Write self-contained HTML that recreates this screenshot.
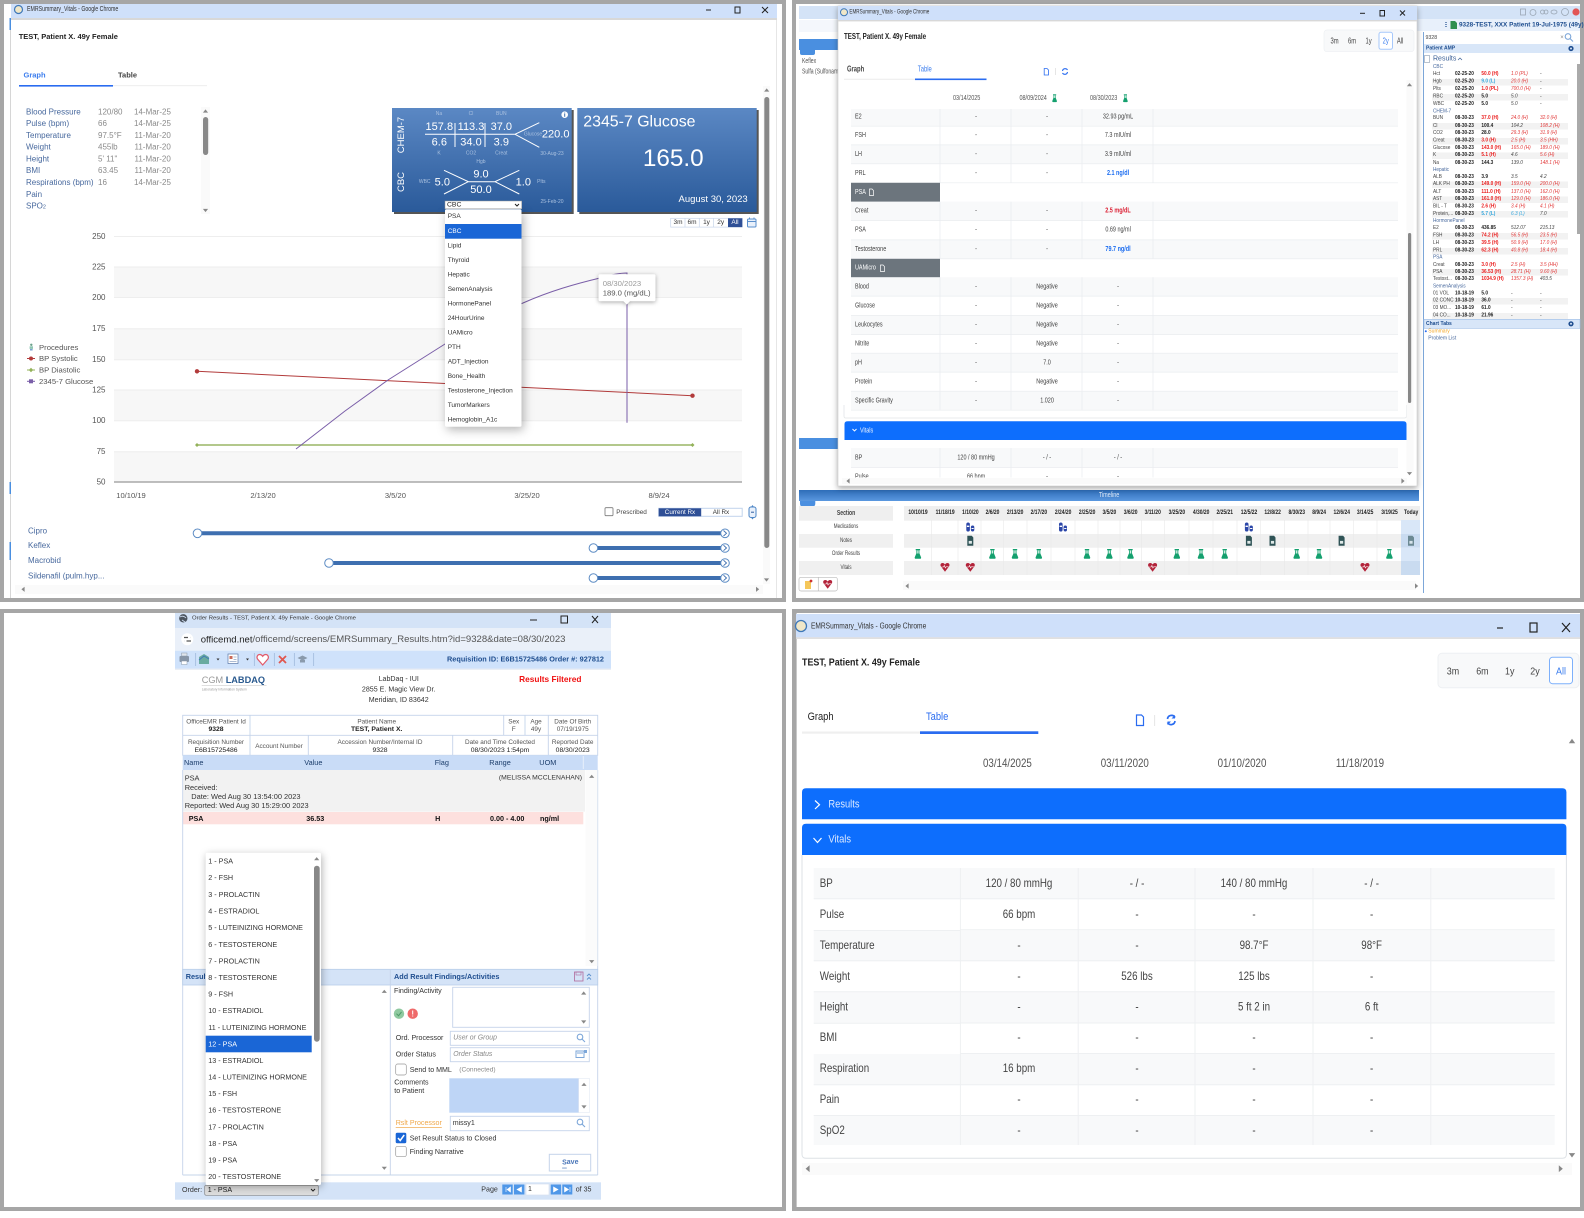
<!DOCTYPE html>
<html lang="en"><head><meta charset="utf-8"><title>EMR Summary</title>
<style>
html,body{margin:0;padding:0;background:#fff}
svg{display:block}
text{font-family:"Liberation Sans",sans-serif;dominant-baseline:central;transform-box:fill-box;transform-origin:0 50%;white-space:pre}
.m{text-anchor:middle;transform-origin:50% 50%}
.e{text-anchor:end;transform-origin:100% 50%}
.ttl text{transform:scaleX(.75)}
.p2 text{transform:scaleX(.73)}
.p2s text{transform:scaleX(.95)}
.p4 text{transform:scaleX(.85)}
text.r90{transform-box:view-box;transform-origin:0 0}
.b{font-weight:bold}
.i{font-style:italic}
.r{fill:#ea1c1c;font-weight:bold}
.ri{fill:#e23a3a;font-style:italic}
.u{fill:#34a6dc;font-weight:bold}
.ui{fill:#34a6dc;font-style:italic}
.d{fill:#222;font-weight:bold}
.n{fill:#444;font-style:italic}
</style></head><body>
<svg xmlns="http://www.w3.org/2000/svg" width="1584" height="1218" viewBox="0 0 1584 1218">
<defs>
<linearGradient id="cg" x1="0" y1="0" x2="0" y2="1"><stop offset="0" stop-color="#5b88c4"/><stop offset="1" stop-color="#2a5a9a"/></linearGradient>
<linearGradient id="tb" x1="0" y1="0" x2="0" y2="1"><stop offset="0" stop-color="#2e6db8"/><stop offset="1" stop-color="#5a98e0"/></linearGradient>
<g id="fl"><rect x="-2.2" y="-5" width="4.4" height="1.3" fill="#14a06e"/><path d="M-1.5-3.7H1.5V-.8L3.2 3.4Q3.4 4.8 2.2 4.8H-2.2Q-3.4 4.8-3.2 3.4L-1.5-.8Z" fill="#14a06e"/><rect x="-.7" y="-3.5" width="1.4" height="3" fill="#cfeee2"/></g>
<g id="pl"><rect x="-4" y="-4.5" width="3.6" height="9" rx="1.8" fill="#2b46a8"/><rect x="-3.4" y="-1.4" width="2.4" height="1.4" fill="#fff"/><rect x=".6" y="-1.5" width="3.4" height="6" rx="1.7" fill="#2b46a8"/><rect x="1.2" y="1" width="2.2" height="1" fill="#fff"/></g>
<g id="nt"><path d="M-3-5H1.5L3-3.2V5H-3Z" fill="#2f5356"/><rect x="-1.6" y=".2" width="3.2" height="2.8" fill="#dfe9e8"/></g>
<g id="ht"><path d="M0 4.8L-4-.5C-5.2-2.2-4.2-4-2.4-4-1.2-4-.4-3.2 0-2.5.4-3.2 1.2-4 2.4-4 4.2-4 5.2-2.2 4-.5Z" fill="#b3233a"/><path d="M-3.5 0H-1.5L-.7-1.5.3 1 1-.2H3.5" stroke="#fff" stroke-width=".6" fill="none"/></g>
<g id="mag" fill="none" stroke="#7da7d9" stroke-width="1.1"><circle cx="-1" cy="-1" r="2.8"/><path d="M1 1L4 4"/></g>
<g id="up"><path d="M-2.6 1.6H2.6L0-1.6Z" fill="#888"/></g>
<g id="dn"><path d="M-2.6-1.6H2.6L0 1.6Z" fill="#888"/></g>
<g id="lf"><path d="M1.6-2.6V2.6L-1.6 0Z" fill="#888"/></g>
<g id="rt"><path d="M-1.6-2.6V2.6L1.6 0Z" fill="#888"/></g>
<g id="up2"><path d="M-3.2 2.2H3.2L0-2.2Z" fill="#888"/></g>
<g id="dn2"><path d="M-3.2-2.2H3.2L0 2.2Z" fill="#888"/></g>
<g id="lf2"><path d="M2-3.4V3.4L-2 0Z" fill="#888"/></g>
<g id="rt2"><path d="M-2-3.4V3.4L2 0Z" fill="#888"/></g>
<clipPath id="clipP2"><rect x="838" y="109" width="560" height="368.5"/></clipPath>
</defs>

<!-- frames -->
<g fill="none" stroke="#a6a6a6" stroke-width="4">
<rect x="2" y="2" width="782" height="598"/>
<rect x="794" y="2" width="788" height="598"/>
<rect x="2" y="611" width="782" height="598"/>
<rect x="794" y="611" width="788" height="598"/>
</g>

<!-- ============ PANEL 1 ============ -->
<g>
<path d="M10.5 18V598" stroke="#d6d6d6" stroke-width="1"/>
<path d="M776.5 18V598" stroke="#e6e6e6" stroke-width="1"/>
<rect x="9.5" y="18" width="1.5" height="12" fill="#4a8fe0"/>
<rect x="9.5" y="482" width="1.5" height="12" fill="#4a8fe0"/>
<rect x="9.5" y="542" width="1.5" height="18" fill="#4a8fe0"/>
<rect x="11" y="4" width="766" height="14" fill="#cfe0fa"/>
<rect x="11" y="18" width="766" height="2" fill="#d8d8d8"/>
<circle cx="18.5" cy="9.5" r="4" fill="#f0e7c8" stroke="#3f78b8" stroke-width="1.2"/>
<g class="ttl"><text x="27" y="9.5" font-size="7" fill="#333">EMRSummary_Vitals - Google Chrome</text></g>
<g stroke="#222" fill="none" stroke-width="1"><path d="M706 10H711"/><rect x="735" y="7" width="5" height="6"/><path d="M762 7L768 13M768 7L762 13"/></g>

<text x="18.7" y="36.3" font-size="7.5" class="b" fill="#222">TEST, Patient X. 49y Female</text>
<text x="23.5" y="75" font-size="7.5" class="b" fill="#3b7dee">Graph</text>
<text x="118" y="75" font-size="7.5" class="b" fill="#444">Table</text>
<rect x="113" y="85" width="94" height="1.2" fill="#f0f0f0"/>
<rect x="19" y="85" width="94" height="1.6" fill="#2a6cf0"/>

<g font-size="8" fill="#48699e">
<text x="26" y="112">Blood Pressure</text><text x="26" y="123.7">Pulse (bpm)</text><text x="26" y="135.6">Temperature</text><text x="26" y="147">Weight</text><text x="26" y="159">Height</text><text x="26" y="170.7">BMI</text><text x="26" y="182.5">Respirations (bpm)</text><text x="26" y="194.3">Pain</text><text x="26" y="206">SPO<tspan dy="1.5" font-size="5.5">2</tspan></text>
</g>
<g font-size="8" fill="#8a8a8a">
<text x="98" y="112">120/80</text><text x="134" y="112">14-Mar-25</text>
<text x="98" y="123.7">66</text><text x="134" y="123.7">14-Mar-25</text>
<text x="98" y="135.6">97.5°F</text><text x="134.5" y="135.6">11-Mar-20</text>
<text x="98" y="147">455lb</text><text x="134.5" y="147">11-Mar-20</text>
<text x="98" y="159">5' 11"</text><text x="134.5" y="159">11-Mar-20</text>
<text x="98" y="170.7">63.45</text><text x="134.5" y="170.7">11-Mar-20</text>
<text x="98" y="182.5">16</text><text x="134" y="182.5">14-Mar-25</text>
</g>
<rect x="201" y="107" width="9" height="107" fill="#fafafa"/>
<rect x="203" y="117" width="5.2" height="38" rx="2.6" fill="#888"/>
<use href="#up" x="205.5" y="111"/><use href="#dn" x="205.5" y="210.5"/>

<!-- chart -->
<g fill="#f7f7f7"><rect x="114" y="267" width="628" height="30.5"/><rect x="114" y="328.7" width="628" height="31"/><rect x="114" y="390" width="628" height="30.7"/><rect x="114" y="451.7" width="628" height="30.3"/></g>
<g stroke="#eeeeee" stroke-width="1"><path d="M114 236.5H742M114 267H742M114 297.5H742M114 328.7H742M114 359.7H742M114 390H742M114 420.7H742M114 451.7H742"/></g>
<path d="M114 482H742" stroke="#a8a8a8" stroke-width="1.4"/>
<g font-size="8" fill="#555">
<text class="e" x="105.5" y="236.5">250</text><text class="e" x="105.5" y="267">225</text><text class="e" x="105.5" y="297.5">200</text><text class="e" x="105.5" y="328.7">175</text><text class="e" x="105.5" y="359.7">150</text><text class="e" x="105.5" y="390">125</text><text class="e" x="105.5" y="420.7">100</text><text class="e" x="105.5" y="451.7">75</text><text class="e" x="105.5" y="482">50</text>
</g>
<g font-size="7.6" fill="#555">
<text class="m" x="131" y="495.3">10/10/19</text><text class="m" x="263" y="495.3">2/13/20</text><text class="m" x="395.4" y="495.3">3/5/20</text><text class="m" x="527" y="495.3">3/25/20</text><text class="m" x="659" y="495.3">8/9/24</text>
</g>
<g font-size="7.7" fill="#555">
<text x="39" y="347.3">Procedures</text><text x="39" y="358.5">BP Systolic</text><text x="39" y="370">BP Diastolic</text><text x="39" y="381.3">2345-7 Glucose</text>
</g>
<circle cx="31.3" cy="344.8" r="1.2" fill="#6aa08a"/><rect x="29.6" y="346.3" width="3.4" height="2.6" fill="#8fc6b2"/><rect x="30" y="349.2" width="2.6" height="1.2" fill="#5a88c4"/>
<path d="M27 358.5H35" stroke="#b23b3b" stroke-width="1"/><circle cx="31" cy="358.5" r="2" fill="#b23b3b"/>
<path d="M27 370H35" stroke="#93b25a" stroke-width="1"/><path d="M31 367.8L33.2 370 31 372.2 28.8 370Z" fill="#93b25a"/>
<path d="M27 381.3H35" stroke="#7a5ea8" stroke-width="1"/><rect x="29" y="379.3" width="4" height="4" fill="#7a5ea8"/>
<path d="M197 371.3L692.5 395.7" stroke="#b23b3b" stroke-width="1" fill="none"/>
<circle cx="197" cy="371.3" r="2.2" fill="#b23b3b"/><circle cx="692.5" cy="395.7" r="2.2" fill="#b23b3b"/>
<path d="M197 445H692.5" stroke="#9ab566" stroke-width="1.6"/>
<path d="M197 443L199 445 197 447 195 445Z M692.5 443L694.5 445 692.5 447 690.5 445Z" fill="#93b25a"/>
<path d="M296 449L345 411L388 380L445 344C470 328 495 314 523 303C550 291 575 284 600 278C610 275 620 273 627 273V422.7" stroke="#7a5ea8" stroke-width="1" fill="none"/>
<!-- tooltip -->
<g style="filter:drop-shadow(0 1px 2px rgba(0,0,0,.35))"><path d="M600 274.3H654a1.5 1.5 0 0 1 1.5 1.5V299.8a1.5 1.5 0 0 1-1.5 1.5H630L626.7 304.5 623.4 301.3H600a1.5 1.5 0 0 1-1.5-1.5V275.8a1.5 1.5 0 0 1 1.5-1.5Z" fill="#fff"/></g>
<text x="602.7" y="283.7" font-size="7.7" fill="#999">08/30/2023</text>
<text x="602.7" y="293" font-size="7.7" fill="#555">189.0 (mg/dL)</text>

<!-- cards -->
<rect x="394" y="110" width="179.7" height="104" fill="#555"/>
<rect x="392" y="108" width="179.7" height="104" fill="url(#cg)"/>
<rect x="579.3" y="110" width="179.4" height="104" fill="#555"/>
<rect x="577.3" y="108" width="179.4" height="104" fill="url(#cg)"/>
<g fill="#fff" font-size="9.5"><text class="r90" transform="translate(401.7 135) rotate(-90)" text-anchor="middle" dominant-baseline="central">CHEM-7</text><text class="r90" transform="translate(401.7 182) rotate(-90)" text-anchor="middle" dominant-baseline="central">CBC</text></g>
<g font-size="5" fill="#a9c0df">
<text class="m" x="439" y="114">Na</text><text class="m" x="471" y="114">Cl</text><text class="m" x="501.3" y="114">BUN</text>
<text class="m" x="439" y="153.7">K</text><text class="m" x="471" y="153.7">CO2</text><text class="m" x="501.3" y="153.7">Creat</text>
<text class="m" x="552" y="154">30-Aug-23</text><text class="m" x="533" y="134.3">Glucose</text>
<text class="m" x="481" y="162">Hgb</text><text class="m" x="424.7" y="182">WBC</text><text class="m" x="541.3" y="182">Plts</text><text class="m" x="552" y="202">25-Feb-20</text>
</g>
<g font-size="11" fill="#fff">
<text class="m" x="439.3" y="127">157.8</text><text class="m" x="471" y="127">113.3</text><text class="m" x="501.3" y="127">37.0</text>
<text class="m" x="439.3" y="142.3">6.6</text><text class="m" x="471" y="142.3">34.0</text><text class="m" x="501.3" y="142.3">3.9</text>
<text class="m" x="555.7" y="134.7">220.0</text>
<text class="m" x="442.3" y="182.7">5.0</text><text class="m" x="481" y="174.7">9.0</text><text class="m" x="481" y="190">50.0</text><text class="m" x="523.3" y="182.7">1.0</text>
</g>
<g stroke="#fff" stroke-width="1" fill="none">
<path d="M425 134.3H515M455 123V147M485 123V147M539.3 122.7L515 134.3 539.3 147.3"/>
<path d="M444 170.3L468.3 181.7 444 194M468.3 181.7H495M519.3 170.3L495 181.7 519.3 194"/>
</g>
<circle cx="564.7" cy="114.7" r="3.3" fill="#fff"/><rect x="564.2" y="114" width="1" height="2.8" fill="#3f6fae"/><rect x="564.2" y="112.6" width="1" height="1" fill="#3f6fae"/>
<text x="583.3" y="122" font-size="15.9" fill="#fff">2345-7 Glucose</text>
<text class="m" x="673.3" y="158.3" font-size="24.3" fill="#fff">165.0</text>
<text class="e" x="747.7" y="199.7" font-size="9.5" fill="#fff">August 30, 2023</text>

<rect x="670.7" y="218.3" width="71.6" height="8.8" fill="#fff" stroke="#c8d6ea" stroke-width=".7"/>
<rect x="728" y="218.3" width="14.3" height="8.8" fill="#2f4f96"/>
<path d="M685 218.3V227M699.3 218.3V227M713.6 218.3V227" stroke="#c8d6ea" stroke-width=".7"/>
<g font-size="6.5" fill="#333"><text class="m" x="678" y="222.7">3m</text><text class="m" x="692" y="222.7">6m</text><text class="m" x="706.5" y="222.7">1y</text><text class="m" x="720.7" y="222.7">2y</text><text class="m" x="735" y="222.7" fill="#fff">All</text></g>
<rect x="747.5" y="219" width="8.5" height="8" rx="1" fill="#e8f0fb" stroke="#5a8fcc"/><path d="M747.5 221.5H756M749.5 217.5V219M754 217.5V219" stroke="#5a8fcc"/>

<!-- select + dropdown -->
<g style="filter:drop-shadow(2px 3px 5px rgba(0,0,0,.3))"><rect x="445" y="209.3" width="76.5" height="217.4" rx="1.5" fill="#fff"/></g>
<rect x="445" y="201" width="76.7" height="7.8" fill="#fff" stroke="#999" stroke-width=".5"/>
<text x="447" y="205" font-size="6.8" fill="#222">CBC</text>
<path d="M515 204L517 206 519 204" stroke="#222" fill="none"/>
<rect x="445" y="224" width="76.5" height="14.7" fill="#1a66d6"/>
<g font-size="6.5" fill="#333">
<text x="447.7" y="216.7">PSA</text><text x="447.7" y="231.3" fill="#fff">CBC</text><text x="447.7" y="246">Lipid</text><text x="447.7" y="260.3">Thyroid</text><text x="447.7" y="275">Hepatic</text><text x="447.7" y="289.3">SemenAnalysis</text><text x="447.7" y="304">HormonePanel</text><text x="447.7" y="318.3">24HourUrine</text><text x="447.7" y="333">UAMicro</text><text x="447.7" y="347.3">PTH</text><text x="447.7" y="362">ADT_Injection</text><text x="447.7" y="376.3">Bone_Health</text><text x="447.7" y="391">Testosterone_Injection</text><text x="447.7" y="405.3">TumorMarkers</text><text x="447.7" y="420">Hemoglobin_A1c</text>
</g>

<!-- Rx -->
<rect x="605" y="507.7" width="8" height="8" rx="1" fill="#fff" stroke="#777" stroke-width=".8"/>
<text x="616.3" y="512.3" font-size="6.4" fill="#444">Prescribed</text>
<rect x="658.7" y="508.3" width="83.5" height="8" fill="#fff" stroke="#c2d4ec"/>
<rect x="658.7" y="508.3" width="42.5" height="8" fill="#2f4f96"/>
<text class="m" x="680" y="512.3" font-size="6.3" fill="#fff">Current Rx</text>
<text class="m" x="721" y="512.3" font-size="6.3" fill="#333">All Rx</text>
<rect x="749" y="507" width="7" height="10.5" rx="2" fill="#e8f0fb" stroke="#4d86c6"/><path d="M751 512.2H754" stroke="#2f5fa0"/><path d="M752.5 505L751 507H754ZM752.5 519.5L751 517.5H754Z" fill="#4d86c6"/>

<!-- drugs -->
<g font-size="8" fill="#48699e"><text x="28" y="531">Cipro</text><text x="28" y="545.7">Keflex</text><text x="28" y="560.7">Macrobid</text><text x="28" y="576">Sildenafil (pulm.hyp...</text></g>
<g stroke="#3e6fb0" stroke-width="4"><path d="M197 533.3H725M593.4 548H725M329 563H725M593.4 578H725"/></g>
<g fill="#fff" stroke="#5d8cc4" stroke-width="1"><circle cx="197.5" cy="533.3" r="4.3"/><circle cx="593.4" cy="548" r="4.3"/><circle cx="329" cy="563" r="4.3"/><circle cx="593.4" cy="578" r="4.3"/><circle cx="725" cy="533.3" r="4.3"/><circle cx="725" cy="548" r="4.3"/><circle cx="725" cy="563" r="4.3"/><circle cx="725" cy="578" r="4.3"/></g>
<g stroke="#3e6fb0" stroke-width=".9" fill="none"><path d="M723.5 530.5L726.5 533.3 723.5 536M723.5 545.2L726.5 548 723.5 550.7M723.5 560.2L726.5 563 723.5 565.7M723.5 575.2L726.5 578 723.5 580.7"/></g>

<!-- scrollbars -->
<rect x="763" y="86" width="7" height="498" fill="#fafafa"/>
<rect x="764.3" y="97" width="5" height="451" rx="2.5" fill="#888"/>
<use href="#up" x="766.7" y="90"/><use href="#dn" x="766.5" y="580"/>
<rect x="15" y="585" width="748" height="9" fill="#fafafa"/>
<use href="#lf" x="23" y="589.3"/><use href="#rt" x="757.6" y="589.3"/>
</g>

<!-- ============ PANEL 2 ============ -->
<g>
<rect x="799" y="6" width="39" height="13" fill="#d4e3f7"/>
<rect x="799" y="20" width="39" height="12" fill="#f4f7fc"/>
<rect x="799" y="39" width="39" height="11" fill="#4a8fe0"/>
<path d="M800 50H815V53Q815 55 813 55H802Q800 55 800 53Z" fill="#4a8fe0"/>
<g class="p2" font-size="7" fill="#555"><text x="802" y="61.5">Keflex</text><text x="802" y="71.7">Sulfa (Sulfonamid</text></g>
<rect x="799" y="438" width="39" height="11" fill="#4a8fe0"/>

<!-- sidebar -->
<rect x="1417" y="6" width="163" height="13" fill="#d4e3f7"/>
<rect x="1417" y="19" width="163" height="12" fill="#e8f0fb"/>
<path d="M1423.5 32V593" stroke="#7da7d9" stroke-width="1"/>
<g fill="none" stroke="#9aa6b4" stroke-width=".8"><rect x="1520.5" y="9" width="5" height="6"/><circle cx="1533" cy="12.5" r="3"/><circle cx="1542.5" cy="12" r="2"/><circle cx="1546" cy="12" r="2"/><ellipse cx="1554" cy="12" rx="3" ry="2"/><circle cx="1565" cy="12" r="3.5"/></g>
<circle cx="1576" cy="12" r="3.6" fill="#e25555"/>
<path d="M1446 22V28" stroke="#1f4e8f" stroke-width="1.2" stroke-dasharray="1 1"/>
<path d="M1450.5 21H1455L1457 23V29H1450.5Z" fill="#2f8f4f"/>
<text x="1459" y="25" font-size="6.4" class="b" fill="#1f4e8f">9328-TEST, XXX Patient 19-Jul-1975 (49y)</text>
<rect x="1424" y="33" width="156" height="9" fill="#fff"/>
<g class="p2s"><text x="1425.5" y="38" font-size="5.5" fill="#444">9328</text></g>
<text x="1562" y="38" font-size="6" fill="#888" class="m">×</text><use href="#mag" x="1569" y="37.5"/>
<rect x="1424" y="44" width="156" height="9" fill="#d8e6f8"/>
<g class="p2s"><text x="1426" y="48.5" font-size="5.3" class="b" fill="#1f4e8f">Patient AMP</text></g>
<circle cx="1571" cy="48.5" r="2.6" fill="#1f4e8f"/><circle cx="1571" cy="48.5" r="1" fill="#d8e6f8"/>
<rect x="1424.5" y="55.5" width="5" height="7" fill="#fff" stroke="#8a9bb0" stroke-width=".6"/>
<text x="1433" y="59" font-size="7" fill="#3a5f95">Results</text><path d="M1458 60L1460 58 1462 60" stroke="#3a5f95" fill="none" stroke-width=".7"/>

<g fill="#f2f2f2"><rect x="1432" y="79" width="136" height="6.5"/><rect x="1432" y="94" width="136" height="6.5"/><rect x="1432" y="123" width="136" height="6.5"/><rect x="1432" y="138" width="136" height="6.5"/><rect x="1432" y="152.5" width="136" height="6.5"/><rect x="1432" y="181.5" width="136" height="6.5"/><rect x="1432" y="196.5" width="136" height="6.5"/><rect x="1432" y="211" width="136" height="6.5"/><rect x="1432" y="233" width="136" height="6.5"/><rect x="1432" y="248" width="136" height="6.5"/><rect x="1432" y="269" width="136" height="6.5"/><rect x="1432" y="298" width="136" height="6.5"/><rect x="1432" y="313" width="136" height="6"/></g>
<g class="p2s" font-size="5">
<g fill="#48699e"><text x="1433" y="67.7">CBC</text><text x="1433" y="112">CHEM-7</text><text x="1433" y="170.3">Hepatic</text><text x="1433" y="221.7">HormonePanel</text><text x="1433" y="258">PSA</text><text x="1433" y="287">SemenAnalysis</text></g>
<g fill="#444"><text x="1433" y="74.7">Hct</text><text x="1433" y="82">Hgb</text><text x="1433" y="89.7">Plts</text><text x="1433" y="97">RBC</text><text x="1433" y="104.7">WBC</text><text x="1433" y="118.7">BUN</text><text x="1433" y="126.3">Cl</text><text x="1433" y="133.7">CO2</text><text x="1433" y="141">Creat</text><text x="1433" y="148.3">Glucose</text><text x="1433" y="155.7">K</text><text x="1433" y="163.3">Na</text><text x="1433" y="177.7">ALB</text><text x="1433" y="184.7">ALK PH</text><text x="1433" y="192.3">ALT</text><text x="1433" y="199.7">AST</text><text x="1433" y="207">BIL - T</text><text x="1433" y="214.3">Protein,...</text><text x="1433" y="228.7">E2</text><text x="1433" y="236">FSH</text><text x="1433" y="243.3">LH</text><text x="1433" y="251">PRL</text><text x="1433" y="265.3">Creat</text><text x="1433" y="272.3">PSA</text><text x="1433" y="279.7">Testost...</text><text x="1433" y="294">01 VOL</text><text x="1433" y="301">02 CONC</text><text x="1433" y="308.3">03 MO...</text><text x="1433" y="316">04 CO...</text></g>
<g class="d">
<text x="1455" y="74.7">02-25-20</text><text x="1455" y="82">02-25-20</text><text x="1455" y="89.7">02-25-20</text><text x="1455" y="97">02-25-20</text><text x="1455" y="104.7">02-25-20</text>
<text x="1455" y="118.7">08-30-23</text><text x="1455" y="126.3">08-30-23</text><text x="1455" y="133.7">08-30-23</text><text x="1455" y="141">08-30-23</text><text x="1455" y="148.3">08-30-23</text><text x="1455" y="155.7">08-30-23</text><text x="1455" y="163.3">08-30-23</text>
<text x="1455" y="177.7">08-30-23</text><text x="1455" y="184.7">08-30-23</text><text x="1455" y="192.3">08-30-23</text><text x="1455" y="199.7">08-30-23</text><text x="1455" y="207">08-30-23</text><text x="1455" y="214.3">08-30-23</text>
<text x="1455" y="228.7">08-30-23</text><text x="1455" y="236">08-30-23</text><text x="1455" y="243.3">08-30-23</text><text x="1455" y="251">08-30-23</text><text x="1455" y="265.3">08-30-23</text><text x="1455" y="272.3">08-30-23</text><text x="1455" y="279.7">08-30-23</text>
<text x="1455" y="294">10-18-19</text><text x="1455" y="301">10-18-19</text><text x="1455" y="308.3">10-18-19</text><text x="1455" y="316">10-18-19</text>
</g>
<text x="1481.4" y="74.7" class="r">50.0 (H)</text><text x="1511" y="74.7" class="ri">1.0 (PL)</text><text x="1540" y="74.7" class="n">-</text>
<text x="1481.4" y="82" class="u">9.0 (L)</text><text x="1511" y="82" class="ri">20.0 (H)</text><text x="1540" y="82" class="n">-</text>
<text x="1481.4" y="89.7" class="r">1.0 (PL)</text><text x="1511" y="89.7" class="ri">700.0 (H)</text><text x="1540" y="89.7" class="n">-</text>
<text x="1481.4" y="97" class="d">5.0</text><text x="1511" y="97" class="n">5.0</text><text x="1540" y="97" class="n">-</text>
<text x="1481.4" y="104.7" class="d">5.0</text><text x="1511" y="104.7" class="n">5.0</text><text x="1540" y="104.7" class="n">-</text>
<text x="1481.4" y="118.7" class="r">37.0 (H)</text><text x="1511" y="118.7" class="ri">24.0 (H)</text><text x="1540" y="118.7" class="ri">32.0 (H)</text>
<text x="1481.4" y="126.3" class="d">100.4</text><text x="1511" y="126.3" class="n">104.2</text><text x="1540" y="126.3" class="ri">108.2 (H)</text>
<text x="1481.4" y="133.7" class="d">28.0</text><text x="1511" y="133.7" class="ri">29.3 (H)</text><text x="1540" y="133.7" class="ri">31.9 (H)</text>
<text x="1481.4" y="141" class="r">3.0 (H)</text><text x="1511" y="141" class="ri">2.5 (H)</text><text x="1540" y="141" class="ri">3.5 (HH)</text>
<text x="1481.4" y="148.3" class="r">143.0 (H)</text><text x="1511" y="148.3" class="ri">165.0 (H)</text><text x="1540" y="148.3" class="ri">189.0 (H)</text>
<text x="1481.4" y="155.7" class="r">5.1 (H)</text><text x="1511" y="155.7" class="n">4.6</text><text x="1540" y="155.7" class="ri">5.6 (H)</text>
<text x="1481.4" y="163.3" class="d">144.3</text><text x="1511" y="163.3" class="n">139.0</text><text x="1540" y="163.3" class="ri">148.1 (H)</text>
<text x="1481.4" y="177.7" class="d">3.9</text><text x="1511" y="177.7" class="n">3.5</text><text x="1540" y="177.7" class="n">4.2</text>
<text x="1481.4" y="184.7" class="r">149.0 (H)</text><text x="1511" y="184.7" class="ri">159.0 (H)</text><text x="1540" y="184.7" class="ri">200.0 (H)</text>
<text x="1481.4" y="192.3" class="r">111.0 (H)</text><text x="1511" y="192.3" class="ri">137.0 (H)</text><text x="1540" y="192.3" class="ri">162.0 (H)</text>
<text x="1481.4" y="199.7" class="r">161.0 (H)</text><text x="1511" y="199.7" class="ri">129.0 (H)</text><text x="1540" y="199.7" class="ri">186.0 (H)</text>
<text x="1481.4" y="207" class="r">2.6 (H)</text><text x="1511" y="207" class="ri">3.4 (H)</text><text x="1540" y="207" class="ri">4.1 (H)</text>
<text x="1481.4" y="214.3" class="u">5.7 (L)</text><text x="1511" y="214.3" class="ui">6.3 (L)</text><text x="1540" y="214.3" class="n">7.0</text>
<text x="1481.4" y="228.7" class="d">436.85</text><text x="1511" y="228.7" class="n">512.07</text><text x="1540" y="228.7" class="n">215.13</text>
<text x="1481.4" y="236" class="r">74.2 (H)</text><text x="1511" y="236" class="ri">56.5 (H)</text><text x="1540" y="236" class="ri">23.5 (H)</text>
<text x="1481.4" y="243.3" class="r">39.5 (H)</text><text x="1511" y="243.3" class="ri">50.9 (H)</text><text x="1540" y="243.3" class="ri">17.0 (H)</text>
<text x="1481.4" y="251" class="r">62.3 (H)</text><text x="1511" y="251" class="ri">40.8 (H)</text><text x="1540" y="251" class="ri">18.4 (H)</text>
<text x="1481.4" y="265.3" class="r">3.0 (H)</text><text x="1511" y="265.3" class="ri">2.5 (H)</text><text x="1540" y="265.3" class="ri">3.5 (HH)</text>
<text x="1481.4" y="272.3" class="r">36.53 (H)</text><text x="1511" y="272.3" class="ri">28.71 (H)</text><text x="1540" y="272.3" class="ri">9.60 (H)</text>
<text x="1481.4" y="279.7" class="r">1034.9 (H)</text><text x="1511" y="279.7" class="ri">1357.3 (H)</text><text x="1540" y="279.7" class="n">403.5</text>
<text x="1481.4" y="294" class="d">5.0</text><text x="1511" y="294" class="n">-</text><text x="1540" y="294" class="n">-</text>
<text x="1481.4" y="301" class="d">36.0</text><text x="1511" y="301" class="n">-</text><text x="1540" y="301" class="n">-</text>
<text x="1481.4" y="308.3" class="d">61.0</text><text x="1511" y="308.3" class="n">-</text><text x="1540" y="308.3" class="n">-</text>
<text x="1481.4" y="316" class="d">21.96</text><text x="1511" y="316" class="n">-</text><text x="1540" y="316" class="n">-</text>
</g>
<rect x="1577" y="64" width="3" height="170" fill="#aaa"/>
<rect x="1424" y="319.3" width="156" height="9" fill="#d8e6f8" stroke="#9dbce6" stroke-width=".6"/>
<g class="p2s"><text x="1426" y="323.8" font-size="5.3" class="b" fill="#1f4e8f">Chart Tabs</text><text x="1428.3" y="331.3" font-size="5.3" fill="#f5a623">Summary</text><text x="1428.3" y="338.3" font-size="5.3" fill="#48699e">Problem List</text></g>
<circle cx="1571" cy="323.8" r="2.6" fill="#1f4e8f"/><circle cx="1571" cy="323.8" r="1" fill="#d8e6f8"/>
<circle cx="1425.8" cy="331.3" r="1" fill="#2a6cf0"/>

<!-- timeline -->
<rect x="799" y="490" width="620" height="11" fill="url(#tb)"/>
<g class="p2"><text class="m" x="1109" y="495.5" font-size="7.5" fill="#dfeaf8">Timeline</text></g>
<path d="M800 501H815.3V503.5Q815.3 506.7 812 506.7H803Q800 506.7 800 503.5Z" fill="#4a8fe0"/>
<rect x="799" y="506" width="94" height="14.7" fill="#efefef"/>
<rect x="904" y="506" width="516" height="14.7" fill="#efefef"/>
<rect x="799" y="534" width="94" height="13.7" fill="#f0f0f0"/>
<rect x="904" y="534" width="516" height="13.7" fill="#f0f0f0"/>
<rect x="799" y="561" width="94" height="14" fill="#f0f0f0"/>
<rect x="904" y="561" width="516" height="14" fill="#f0f0f0"/>
<rect x="1401" y="520" width="19" height="14" fill="#d9e7f8"/><rect x="1401" y="534" width="19" height="13.7" fill="#c9dbf0"/><rect x="1401" y="547.7" width="19" height="13.3" fill="#d9e7f8"/><rect x="1401" y="561" width="19" height="14" fill="#c9dbf0"/>
<g stroke="#e8e8e8" stroke-width=".6"><path d="M931.5 520V575M958 520V575M981 520V575M1003.7 520V575M1027 520V575M1051 520V575M1075 520V575M1098 520V575M1120 520V575M1141.5 520V575M1164.7 520V575M1189 520V575M1213 520V575M1237 520V575M1260.7 520V575M1284.6 520V575M1308 520V575M1330 520V575M1353.3 520V575M1377 520V575"/></g>
<g class="p2" font-size="7" fill="#444"><text class="m b" x="846" y="513.5">Section</text><text class="m" x="846" y="527" font-size="6.3">Medications</text><text class="m" x="846" y="540.7" font-size="6.3">Notes</text><text class="m" x="846" y="554" font-size="6.3">Order Results</text><text class="m" x="846" y="567.7" font-size="6.3">Vitals</text></g>
<g class="p2" font-size="6.8" fill="#222">
<text class="m b" x="917.9" y="513">10/10/19</text><text class="m b" x="945" y="513">11/18/19</text><text class="m b" x="970.3" y="513">1/10/20</text><text class="m b" x="992.4" y="513">2/6/20</text><text class="m b" x="1015" y="513">2/13/20</text><text class="m b" x="1038.8" y="513">2/17/20</text><text class="m b" x="1063" y="513">2/24/20</text><text class="m b" x="1087" y="513">2/25/20</text><text class="m b" x="1109.3" y="513">3/5/20</text><text class="m b" x="1130.5" y="513">3/6/20</text><text class="m b" x="1152.6" y="513">3/11/20</text><text class="m b" x="1176.8" y="513">3/25/20</text><text class="m b" x="1201" y="513">4/30/20</text><text class="m b" x="1224.7" y="513">2/25/21</text><text class="m b" x="1248.9" y="513">12/5/22</text><text class="m b" x="1272.5" y="513">12/8/22</text><text class="m b" x="1296.7" y="513">8/30/23</text><text class="m b" x="1319" y="513">8/9/24</text><text class="m b" x="1341.6" y="513">12/6/24</text><text class="m b" x="1365" y="513">3/14/25</text><text class="m b" x="1389.4" y="513">3/19/25</text><text class="m b" x="1411" y="513">Today</text>
</g>
<use href="#pl" x="970.3" y="527"/><use href="#pl" x="1063" y="527"/><use href="#pl" x="1248.9" y="527"/>
<use href="#nt" x="970.3" y="540.7"/><use href="#nt" x="1248.9" y="540.7"/><use href="#nt" x="1272.5" y="540.7"/><use href="#nt" x="1341.6" y="540.7"/><use href="#nt" x="1411" y="540.7" opacity=".6"/>
<use href="#fl" x="917.9" y="554"/><use href="#fl" x="992.4" y="554"/><use href="#fl" x="1015" y="554"/><use href="#fl" x="1038.8" y="554"/><use href="#fl" x="1087" y="554"/><use href="#fl" x="1109.3" y="554"/><use href="#fl" x="1130.5" y="554"/><use href="#fl" x="1176.8" y="554"/><use href="#fl" x="1201" y="554"/><use href="#fl" x="1224.7" y="554"/><use href="#fl" x="1296.7" y="554"/><use href="#fl" x="1319" y="554"/><use href="#fl" x="1389.4" y="554"/>
<use href="#ht" x="945" y="567"/><use href="#ht" x="970.3" y="567"/><use href="#ht" x="1152.6" y="567"/><use href="#ht" x="1365" y="567"/>
<rect x="799" y="577.3" width="38.3" height="13.7" rx="2" fill="#fff" stroke="#bbb" stroke-width=".7"/><path d="M818.3 577.3V591" stroke="#bbb" stroke-width=".7"/>
<path d="M805 581H811V589H805Z" fill="#f5c75a"/><circle cx="811" cy="581" r="1.4" fill="#c33"/>
<use href="#ht" x="827.7" y="584"/>
<rect x="903" y="581" width="513" height="9" fill="#fafafa"/>
<use href="#lf" x="907" y="586"/><use href="#rt" x="1416.6" y="586"/>

<!-- popup window -->
<g style="filter:drop-shadow(0 2px 3px rgba(0,0,0,.35))"><rect x="838" y="6" width="579" height="480" fill="#fff" stroke="#cfcfcf" stroke-width=".6"/></g>
<rect x="838" y="6" width="579" height="14" fill="#cfe0fa"/><rect x="838" y="20" width="579" height="1.4" fill="#d8d8d8"/>
<circle cx="844" cy="12.3" r="3.5" fill="#f0e7c8" stroke="#3f78b8"/>
<g class="p2"><text x="849.4" y="12.3" font-size="6.3" fill="#333">EMRSummary_Vitals - Google Chrome</text></g>
<g stroke="#222" fill="none" stroke-width="1"><path d="M1360 13.3H1365"/><rect x="1380" y="10.5" width="4.5" height="5.5"/><path d="M1400 10.5L1405 15.5M1405 10.5L1400 15.5"/></g>
<g class="p2"><text x="844" y="36" font-size="8.5" class="b" fill="#222">TEST, Patient X. 49y Female</text>
<text x="847" y="69.7" font-size="8" class="b" fill="#444">Graph</text><text x="917.8" y="69.7" font-size="8" fill="#3b7dee">Table</text></g>
<rect x="844" y="78.7" width="71" height="1.2" fill="#efefef"/><rect x="915" y="78.5" width="71.5" height="1.6" fill="#2a6cf0"/>
<path d="M1044.2 68.5H1047L1048.5 70V75H1044.2Z" fill="#fff" stroke="#2a6cf0" stroke-width=".8"/>
<path d="M1055.5 68V75" stroke="#e5e5e5"/>
<path d="M1062.5 71A2.7 2.7 0 0 1 1067.5 70M1067.5 72A2.7 2.7 0 0 1 1062.5 73" stroke="#2a6cf0" fill="none" stroke-width="1.1"/>
<rect x="1324" y="30" width="90" height="21.7" rx="3" fill="#f8f9fa" stroke="#eef0f3" stroke-width=".7"/>
<rect x="1379" y="32.3" width="13.5" height="17" rx="2" fill="#fff" stroke="#a6c8fb"/>
<g class="p2" font-size="8" fill="#444"><text class="m" x="1334.6" y="41.7">3m</text><text class="m" x="1352" y="41.7">6m</text><text class="m" x="1368.5" y="41.7">1y</text><text class="m" x="1385.6" y="41.7" fill="#3b7dee">2y</text><text class="m" x="1400" y="41.7">All</text></g>
<g class="p2" font-size="7.5" fill="#555"><text x="953" y="98.3">03/14/2025</text><text x="1019.5" y="98.3">08/09/2024</text><text x="1090" y="98.3">08/30/2023</text></g>
<use href="#fl" transform="translate(1054.6 98.3) scale(.72 .8)"/><use href="#fl" transform="translate(1125.4 98.3) scale(.72 .8)"/>

<g clip-path="url(#clipP2)">
<g fill="#f8f9fa"><rect x="851" y="107.2" width="547" height="19"/><rect x="851" y="144.9" width="547" height="18.9"/><rect x="851" y="201.6" width="547" height="18.9"/><rect x="851" y="239.9" width="547" height="18.9"/><rect x="851" y="277.2" width="547" height="18.9"/><rect x="851" y="315.5" width="547" height="19"/><rect x="851" y="353.2" width="547" height="18.9"/><rect x="851" y="391.2" width="547" height="19"/><rect x="851" y="448" width="547" height="19.7"/></g>
<g stroke="#e9ecef" stroke-width=".7"><path d="M851 126.2H1398M851 144.9H1398M851 163.8H1398M851 182.8H1398M851 220.5H1398M851 239.9H1398M851 258.8H1398M851 296.1H1398M851 315.5H1398M851 334.5H1398M851 353.2H1398M851 372.1H1398M851 391.2H1398M851 410.2H1398M851 467.7H1398"/>
<path d="M940 107V182.8M1011 107V182.8M1082 107V182.8M1153 107V182.8M940 201.6V258.8M1011 201.6V258.8M1082 201.6V258.8M1153 201.6V258.8M940 277.2V410.2M1011 277.2V410.2M1082 277.2V410.2M1153 277.2V410.2M940 448V478M1011 448V478M1082 448V478M1153 448V478"/></g>
<rect x="851" y="182.8" width="89" height="18.8" fill="#6c757d"/>
<rect x="851" y="258.8" width="89" height="18.4" fill="#6c757d"/>
<g class="p2" font-size="7.5" fill="#444">
<text x="855" y="116.7">E2</text><text class="m" x="976" y="116.7">-</text><text class="m" x="1047" y="116.7">-</text><text class="m" x="1118" y="116.7">32.93 pg/mL</text>
<text x="855" y="135.3">FSH</text><text class="m" x="976" y="135.3">-</text><text class="m" x="1047" y="135.3">-</text><text class="m" x="1118" y="135.3">7.3 mIU/ml</text>
<text x="855" y="154.3">LH</text><text class="m" x="976" y="154.3">-</text><text class="m" x="1047" y="154.3">-</text><text class="m" x="1118" y="154.3">3.9 mIU/ml</text>
<text x="855" y="173.3">PRL</text><text class="m" x="976" y="173.3">-</text><text class="m" x="1047" y="173.3">-</text><text class="m b" x="1118" y="173.3" fill="#1a6cf0">2.1 ng/dl</text>
<text x="855" y="192.3" fill="#fff">PSA</text>
<text x="855" y="211">Creat</text><text class="m" x="976" y="211">-</text><text class="m" x="1047" y="211">-</text><text class="m b" x="1118" y="211" fill="#dc2538">2.5 mg/dL</text>
<text x="855" y="230">PSA</text><text class="m" x="976" y="230">-</text><text class="m" x="1047" y="230">-</text><text class="m" x="1118" y="230">0.69 ng/ml</text>
<text x="855" y="249.3">Testosterone</text><text class="m" x="976" y="249.3">-</text><text class="m" x="1047" y="249.3">-</text><text class="m b" x="1118" y="249.3" fill="#1a6cf0">79.7 ng/dl</text>
<text x="855" y="268" fill="#fff">UAMicro</text>
<text x="855" y="286.7">Blood</text><text class="m" x="976" y="286.7">-</text><text class="m" x="1047" y="286.7">Negative</text><text class="m" x="1118" y="286.7">-</text>
<text x="855" y="305.7">Glucose</text><text class="m" x="976" y="305.7">-</text><text class="m" x="1047" y="305.7">Negative</text><text class="m" x="1118" y="305.7">-</text>
<text x="855" y="325">Leukocytes</text><text class="m" x="976" y="325">-</text><text class="m" x="1047" y="325">Negative</text><text class="m" x="1118" y="325">-</text>
<text x="855" y="343.7">Nitrite</text><text class="m" x="976" y="343.7">-</text><text class="m" x="1047" y="343.7">Negative</text><text class="m" x="1118" y="343.7">-</text>
<text x="855" y="362.7">pH</text><text class="m" x="976" y="362.7">-</text><text class="m" x="1047" y="362.7">7.0</text><text class="m" x="1118" y="362.7">-</text>
<text x="855" y="381.7">Protein</text><text class="m" x="976" y="381.7">-</text><text class="m" x="1047" y="381.7">Negative</text><text class="m" x="1118" y="381.7">-</text>
<text x="855" y="400.7">Specific Gravity</text><text class="m" x="976" y="400.7">-</text><text class="m" x="1047" y="400.7">1.020</text><text class="m" x="1118" y="400.7">-</text>
<text x="855" y="458">BP</text><text class="m" x="976" y="458">120 / 80 mmHg</text><text class="m" x="1047" y="458">- / -</text><text class="m" x="1118" y="458">- / -</text>
<text x="855" y="476.7">Pulse</text><text class="m" x="976" y="476.7">66 bpm</text><text class="m" x="1047" y="476.7">-</text><text class="m" x="1118" y="476.7">-</text>
</g>
</g>
<path d="M869.5 189H872L873.5 190.5V195.5H869.5Z" fill="none" stroke="#fff" stroke-width=".7"/>
<path d="M880.5 265H883L884.5 266.5V271.5H880.5Z" fill="none" stroke="#fff" stroke-width=".7"/>
<path d="M845.5 418H1404.5Q1406.5 418 1406.5 416V405M845.5 418Q844 418 844 416V405" stroke="#e2e5e8" fill="none" stroke-width=".8"/>
<path d="M848 421.3H1403Q1406.5 421.3 1406.5 424V440H844.5V424Q844.5 421.3 848 421.3Z" fill="#0d6efd"/>
<path d="M852.5 429L854.5 431 856.5 429" stroke="#fff" fill="none" stroke-width=".9"/>
<g class="p2"><text x="860" y="430.7" font-size="7.5" fill="#e6f0ff">Vitals</text></g>
<rect x="1406.5" y="80" width="7" height="392" fill="#fafafa"/>
<rect x="1408" y="233" width="3.2" height="170" rx="1.5" fill="#888"/>
<use href="#up" x="1409.5" y="84.7"/><use href="#dn" x="1409.5" y="473.7"/>
<rect x="842" y="478" width="565" height="6" fill="#fafafa"/>
<use href="#lf" x="848" y="481"/><use href="#rt" x="1403" y="481"/>
</g>

<!-- ============ PANEL 3 ============ -->
<g>
<rect x="175" y="613" width="436" height="15" fill="#d4e3f7"/>
<circle cx="183.3" cy="618.3" r="4.2" fill="#4c5560"/><path d="M180 617Q183 615 186 618" stroke="#d4e3f7" fill="none" stroke-width=".8"/><path d="M182 620L185 622" stroke="#d4e3f7" stroke-width=".8"/>
<text x="192" y="618.3" font-size="5.9" fill="#333">Order Results - TEST, Patient X. 49y Female - Google Chrome</text>
<g stroke="#222" fill="none" stroke-width="1"><path d="M530 620H537"/><rect x="561" y="616" width="6.5" height="7"/><path d="M592 616L598 623M598 616L592 623"/></g>
<rect x="175" y="628" width="436" height="22.7" fill="#eaf0f9"/>
<circle cx="187.3" cy="639.3" r="6" fill="#fff"/><path d="M184 637.5H188M186.5 641H191M190 637.5h.1M184.5 641h.1" stroke="#555" stroke-width="1.2" fill="none"/>
<text x="200.7" y="639.7" font-size="9.55" fill="#555"><tspan fill="#222">officemd.net</tspan>/officemd/screens/EMRSummary_Results.htm?id=9328&amp;date=08/30/2023</text>
<rect x="175" y="650.7" width="436" height="18" fill="#cfe2fb"/>
<g stroke="#9ab4d8" stroke-width=".7"><path d="M195.7 653V666M254.3 653V666M274.3 653V666M294.3 653V666M313.7 653V666"/></g>
<rect x="179.5" y="656" width="9.5" height="6" rx="1" fill="#8796a8"/><rect x="181.5" y="653" width="5.5" height="3" fill="#dfe5ec" stroke="#8796a8" stroke-width=".5"/><rect x="181.5" y="661" width="5.5" height="3.5" fill="#fff" stroke="#8796a8" stroke-width=".5"/>
<path d="M199 664V657L204 654 209 657V664Z" fill="#6aaba0"/><path d="M199 660L204 656 209 659" fill="none" stroke="#3f78b8"/>
<path d="M216.5 658.5H219.5L218 660.5Z" fill="#333"/>
<rect x="228" y="654" width="10" height="9.5" fill="#fff" stroke="#5a78a8" stroke-width=".7"/><rect x="229.5" y="656" width="3" height="3" fill="#c96a5a"/><path d="M233.5 657H236.5M233.5 659.5H236.5M229.5 661.5H236.5" stroke="#5a78a8" stroke-width=".6"/>
<path d="M246 658.5H249L247.5 660.5Z" fill="#333"/>
<path d="M262.7 665L257.5 659C256.3 657 257.5 654.5 259.7 654.5 261 654.5 262 655.3 262.7 656.3 263.4 655.3 264.4 654.5 265.7 654.5 267.9 654.5 269.1 657 267.9 659Z" fill="#fff" stroke="#e25a6a" stroke-width="1.2"/>
<path d="M279 656L286 663M286 656L279 663" stroke="#e0574f" stroke-width="1.8"/>
<path d="M297.5 658L302.5 655.5 307.5 658 302.5 660.5Z" fill="#8a9aac"/><path d="M300 660V662.5H305V660" fill="#8a9aac"/>
<text class="e b" x="604" y="659" font-size="7.3" fill="#1f4e8f">Requisition ID: E6B15725486 Order #: 927812</text>
<rect x="175" y="668.7" width="436" height="1" fill="#e0e7f0"/>

<text x="201.7" y="680" font-size="9.2" fill="#9a9a9a">CGM <tspan class="b" fill="#2a5a8f">LABDAQ</tspan></text>
<path d="M201.7 685.7H266.5" stroke="#ccc" stroke-width=".7"/>
<text x="201.7" y="689.3" font-size="3.3" fill="#999">Laboratory Information System</text>
<g font-size="7.1" fill="#333"><text class="m" x="398.7" y="679">LabDaq - IUI</text><text class="m" x="398.7" y="689.3">2855 E. Magic View Dr.</text><text class="m" x="398.7" y="700">Meridian, ID 83642</text></g>
<text class="m b" x="550.3" y="679" font-size="8.3" fill="#f01010">Results Filtered</text>

<g fill="none" stroke="#c5d4ea" stroke-width=".9"><rect x="182.7" y="715.3" width="415" height="40"/><path d="M182.7 735.3H597.7M250 715.3V755.3M503.7 715.3V735.3M525 715.3V735.3M548.3 715.3V755.3M308.3 735.3V755.3M452.7 735.3V755.3"/></g>
<g font-size="6.4" fill="#555">
<text class="m" x="216" y="722">OfficeEMR Patient Id</text><text class="m" x="376.7" y="722">Patient Name</text><text class="m" x="513.7" y="722">Sex</text><text class="m" x="536" y="722">Age</text><text class="m" x="572.7" y="722">Date Of Birth</text>
<text class="m" x="513.7" y="729.3">F</text><text class="m" x="536" y="729.3">49y</text><text class="m" x="572.7" y="729.3">07/19/1975</text>
<text class="m" x="216" y="742.3">Requisition Number</text><text class="m" x="279" y="746.7">Account Number</text><text class="m" x="380" y="742.3">Accession Number/Internal ID</text><text class="m" x="500" y="742.3">Date and Time Collected</text><text class="m" x="572.7" y="742.3">Reported Date</text>
</g>
<g font-size="6.8" fill="#222">
<text class="m b" x="216" y="729.3">9328</text><text class="m b" x="376.7" y="729.3">TEST, Patient X.</text>
<text class="m" x="216" y="750.3">E6B15725486</text><text class="m" x="380" y="750.3">9328</text><text class="m" x="500" y="750.3">08/30/2023 1:54pm</text><text class="m" x="572.7" y="750.3">08/30/2023</text>
</g>
<rect x="182.7" y="755.3" width="415" height="14.7" fill="#c9dcf7"/>
<path d="M583.3 756V769" stroke="#e8f0fb" stroke-width="1"/>
<g font-size="7.3" fill="#1b3d6b"><text x="184" y="762.3">Name</text><text x="304.3" y="762.3">Value</text><text x="434.7" y="762.3">Flag</text><text x="489.3" y="762.3">Range</text><text x="539.3" y="762.3">UOM</text></g>
<rect x="183" y="770" width="402" height="41.7" fill="#f2f2f2"/>
<g font-size="7.4" fill="#333"><text x="184.7" y="778">PSA</text><text x="184.7" y="787.3">Received:</text><text x="191.3" y="796.3">Date: Wed Aug 30 13:54:00 2023</text><text x="184.7" y="805.3">Reported: Wed Aug 30 15:29:00 2023</text><text class="e" x="582" y="778" font-size="6.8">(MELISSA MCCLENAHAN)</text></g>
<rect x="183" y="812" width="400.3" height="12.3" fill="#fde0de"/>
<g font-size="7.2" class="b" fill="#111"><text x="188.7" y="818.7">PSA</text><text class="m" x="315.3" y="818.7">36.53</text><text class="m" x="437.7" y="818.7">H</text><text x="490" y="818.7">0.00 - 4.00</text><text x="540" y="818.7">ng/ml</text></g>
<path d="M182.7 770V1175M597.7 770V1175" stroke="#c5d4ea" stroke-width=".9"/>
<rect x="585.5" y="770" width="12" height="196" fill="#fbfbfb"/>
<use href="#up" x="591.7" y="776.3"/><use href="#dn" x="591.7" y="961.7"/>

<rect x="182.7" y="969.3" width="415" height="15.7" fill="#d4e3f7" stroke="#b8cde9" stroke-width=".8"/>
<text x="185.7" y="976.3" font-size="7.3" class="b" fill="#1f4e8f">Results</text>
<path d="M390.3 969.3V1175" stroke="#c5d4ea" stroke-width=".9"/>
<text x="394" y="976.3" font-size="7.3" class="b" fill="#1f4e8f">Add Result Findings/Activities</text>
<rect x="574.5" y="972" width="8.5" height="9" fill="none" stroke="#b06a9c" stroke-width=".8"/><rect x="576" y="972" width="5" height="3" fill="none" stroke="#b06a9c" stroke-width=".6"/>
<path d="M587 976L589 974 591 976M587 979.5L589 977.5 591 979.5" stroke="#5a8fcc" fill="none" stroke-width=".9"/>
<path d="M182.7 1175H597.7" stroke="#c5d4ea" stroke-width=".9"/>
<use href="#up" x="384.3" y="991.3"/><use href="#dn" x="384.3" y="1168.3"/>
<g font-size="7.1" fill="#333"><text x="394" y="991">Finding/Activity</text><text x="395.7" y="1038">Ord. Processor</text><text x="395.7" y="1054.3">Order Status</text><text x="409.7" y="1070">Send to MML</text><text x="394.3" y="1082.3">Comments</text><text x="394.3" y="1091">to Patient</text><text x="409.7" y="1138.3">Set Result Status to Closed</text><text x="409.7" y="1152">Finding Narrative</text></g>
<text x="459.3" y="1070" font-size="6.6" fill="#888">(Connected)</text>
<rect x="452.7" y="987.3" width="136.6" height="40" fill="#fff" stroke="#c5d4ea" stroke-width=".9"/>
<use href="#up" x="583.7" y="993"/><use href="#dn" x="583.7" y="1022"/>
<circle cx="399" cy="1013.7" r="5.2" fill="#8fc9a0"/><path d="M396.5 1013.7L398.5 1015.7 401.5 1012" stroke="#4f9a68" fill="none"/>
<circle cx="412.7" cy="1013.7" r="5.2" fill="#ef6a6a"/><rect x="412.2" y="1010.5" width="1" height="4" fill="#fff"/><rect x="412.2" y="1015.5" width="1" height="1" fill="#fff"/>
<g fill="#fff" stroke="#c5d4ea" stroke-width=".9"><rect x="450.3" y="1031.3" width="139" height="14"/><rect x="450.3" y="1047.7" width="139" height="14"/><rect x="450.3" y="1116.3" width="139" height="14.4"/></g>
<g font-size="6.9" class="i" fill="#888"><text x="453.3" y="1038">User or Group</text><text x="453.3" y="1054.3">Order Status</text></g>
<use href="#mag" x="581" y="1038"/><use href="#mag" x="581" y="1123"/>
<rect x="576" y="1051" width="8" height="6.5" fill="#fff" stroke="#7da7d9"/><rect x="584" y="1050" width="3" height="3" fill="#7da7d9"/><path d="M577 1053H583" stroke="#7da7d9"/>
<g fill="#fff" stroke="#999" stroke-width=".7"><rect x="395.7" y="1064" width="10.6" height="11" rx="2"/><rect x="395.7" y="1146.3" width="10.6" height="10.4" rx="2"/></g>
<rect x="395.7" y="1132.7" width="10.6" height="10.6" rx="1.5" fill="#1a66d6"/><path d="M398 1138L400.2 1140.5 404.2 1135" stroke="#fff" stroke-width="1.5" fill="none"/>
<rect x="449.3" y="1078.3" width="129.4" height="34.4" fill="#bed5f6"/><rect x="578.7" y="1078.3" width="10.6" height="34.4" fill="#fff" stroke="#e2e8f2" stroke-width=".6"/>
<use href="#up" x="584" y="1084.3"/><use href="#dn" x="584" y="1107"/>
<text x="395.7" y="1123" font-size="7.1" fill="#f0a84a" text-decoration="underline">Rslt Processor</text>
<text x="452.7" y="1123" font-size="7.1" fill="#333">missy1</text>
<rect x="549.3" y="1154.3" width="41.4" height="16.7" fill="#fff" stroke="#c5d4ea"/>
<text class="m b" x="570.3" y="1162.7" font-size="7" fill="#4a76b8"><tspan text-decoration="underline">S</tspan>ave</text>

<rect x="175" y="1182.3" width="426" height="17.4" fill="#d4e3f7"/>
<text x="182" y="1190" font-size="7.1" fill="#333">Order:</text>
<rect x="204.7" y="1185.3" width="113.6" height="10" rx="1.5" fill="#ddd" stroke="#888" stroke-width=".7"/>
<text x="207.7" y="1190" font-size="7.1" fill="#222">1 - PSA</text>
<path d="M311 1189L313 1191 315 1189" stroke="#222" fill="none"/>
<text x="481.3" y="1189.3" font-size="7.1" fill="#333">Page</text>
<g fill="#4f97e8"><rect x="502.3" y="1184.5" width="10.4" height="10"/><rect x="514" y="1184.5" width="10.4" height="10"/><rect x="550.7" y="1184.5" width="10.4" height="10"/><rect x="562.3" y="1184.5" width="10" height="10"/></g>
<path d="M506 1187V1192M510.5 1187V1192L507 1189.5ZM521.5 1187V1192L517 1189.5ZM553.5 1187V1192L558 1189.5ZM564.5 1187V1192L568.5 1189.5ZM570 1187V1192" fill="#fff" stroke="#fff" stroke-width=".6"/>
<rect x="526" y="1184" width="23" height="11" fill="#fff" stroke="#d8e2f0" stroke-width=".7"/>
<text x="528" y="1189.7" font-size="7" fill="#333">1</text>
<text x="575.7" y="1189.3" font-size="7.1" fill="#333">of 35</text>

<g style="filter:drop-shadow(1px 2px 4px rgba(0,0,0,.3))"><rect x="205.7" y="852.7" width="115.3" height="332.3" rx="1.5" fill="#fff"/></g>
<rect x="205.7" y="1035.7" width="106" height="16.6" fill="#1a66d6"/>
<rect x="314" y="865.7" width="5.7" height="176" rx="2.8" fill="#888"/>
<use href="#up" x="316.7" y="858.7"/><use href="#dn" x="316.7" y="1180.7"/>
<g font-size="7.2" fill="#333">
<text x="208.3" y="861">1 - PSA</text><text x="208.3" y="877.7">2 - FSH</text><text x="208.3" y="894.3">3 - PROLACTIN</text><text x="208.3" y="911">4 - ESTRADIOL</text><text x="208.3" y="927.7">5 - LUTEINIZING HORMONE</text><text x="208.3" y="944.3">6 - TESTOSTERONE</text><text x="208.3" y="961">7 - PROLACTIN</text><text x="208.3" y="977.3">8 - TESTOSTERONE</text><text x="208.3" y="994">9 - FSH</text><text x="208.3" y="1010.7">10 - ESTRADIOL</text><text x="208.3" y="1027.3">11 - LUTEINIZING HORMONE</text><text x="208.3" y="1044" fill="#fff">12 - PSA</text><text x="208.3" y="1060.3">13 - ESTRADIOL</text><text x="208.3" y="1077">14 - LUTEINIZING HORMONE</text><text x="208.3" y="1093.7">15 - FSH</text><text x="208.3" y="1110">16 - TESTOSTERONE</text><text x="208.3" y="1127">17 - PROLACTIN</text><text x="208.3" y="1143.7">18 - PSA</text><text x="208.3" y="1160">19 - PSA</text><text x="208.3" y="1176.7">20 - TESTOSTERONE</text>
</g>
</g>

<!-- ============ PANEL 4 ============ -->
<g class="p4">
<path d="M796.5 613V1207" stroke="#c8c8c8" stroke-width="1"/>
<rect x="796" y="614" width="784" height="23.3" fill="#cfe0fa"/><rect x="796" y="637.3" width="784" height="1.6" fill="#dcdcdc"/>
<circle cx="801" cy="626" r="5.5" fill="#f0e7c8" stroke="#3f78b8" stroke-width="1.3"/>
<text x="811" y="626" font-size="7.8" fill="#333">EMRSummary_Vitals - Google Chrome</text>
<g stroke="#222" fill="none" stroke-width="1.2"><path d="M1497 628H1503"/><rect x="1530" y="623" width="7" height="9"/><path d="M1562 623L1570 632M1570 623L1562 632"/></g>
<text x="802" y="662.7" font-size="10.5" class="b" fill="#222">TEST, Patient X. 49y Female</text>
<rect x="1438" y="653.3" width="141" height="34.4" rx="4" fill="#f8f9fa" stroke="#eef0f3"/>
<rect x="1549.5" y="657.3" width="23" height="26.4" rx="3" fill="#fff" stroke="#7db0fb"/>
<g font-size="10.5" fill="#444"><text class="m" x="1453" y="671.7">3m</text><text class="m" x="1482.4" y="671.7">6m</text><text class="m" x="1509.7" y="671.7">1y</text><text class="m" x="1535" y="671.7">2y</text><text class="m" x="1561" y="671.7" fill="#3b7dee">All</text></g>
<text x="807.6" y="717.3" font-size="11" fill="#222">Graph</text>
<text x="926" y="717.3" font-size="11" fill="#2a6cf0">Table</text>
<rect x="802" y="731.5" width="118" height="2.2" fill="#efefef"/><rect x="920" y="731.3" width="118.3" height="2.7" fill="#2a6cf0"/>
<path d="M1136.5 715H1141.5L1143.5 717V725.5H1136.5Z" fill="#fff" stroke="#2a6cf0" stroke-width="1.2"/>
<path d="M1154.6 715V726" stroke="#e5e5e5"/>
<path d="M1167.5 719A4 4 0 0 1 1175 717.5M1175 721A4 4 0 0 1 1167.5 722.5" stroke="#2a6cf0" fill="none" stroke-width="1.7"/>
<path d="M1175 715V718.5H1171.5ZM1167.5 725V721.5H1171Z" fill="#2a6cf0"/>
<use href="#up2" x="1572" y="741"/>
<g font-size="11.5" fill="#555"><text class="m" x="1007.4" y="764">03/14/2025</text><text class="m" x="1124.8" y="764">03/11/2020</text><text class="m" x="1242" y="764">01/10/2020</text><text class="m" x="1360" y="764">11/18/2019</text></g>
<path d="M806 788.3H1562.4Q1566.4 788.3 1566.4 792.3V819.3H802V792.3Q802 788.3 806 788.3Z" fill="#0d6efd"/>
<path d="M806 823.7H1562.4Q1566.4 823.7 1566.4 827.7V855H802V827.7Q802 823.7 806 823.7Z" fill="#0d6efd"/>
<path d="M815 800.5L819.5 804.7 815 809" stroke="#fff" fill="none" stroke-width="1.2"/>
<path d="M813.5 838L817.5 842.5 821.5 838" stroke="#fff" fill="none" stroke-width="1.2"/>
<g font-size="11" fill="#dce9ff"><text x="828.4" y="804.7">Results</text><text x="828.4" y="840">Vitals</text></g>
<path d="M802 855V1154.3Q802 1158.3 806 1158.3H1562.4Q1566.4 1158.3 1566.4 1154.3V855" fill="none" stroke="#dee2e6" stroke-width="1"/>
<g fill="#f8f9fa"><rect x="813.7" y="868" width="741" height="30.8"/><rect x="813.7" y="930.5" width="741" height="30.8"/><rect x="813.7" y="992" width="741" height="30.8"/><rect x="813.7" y="1054" width="741" height="30.8"/><rect x="813.7" y="1115.5" width="741" height="29.5"/></g>
<g stroke="#eef0f2" stroke-width="1"><path d="M813.7 898.8H1554.7M960.4 929.7H1554.7M813.7 930.5H960.4M813.7 960.7H1554.7M813.7 991.7H1554.7M960.4 1023H1554.7M813.7 1023.3H960.4M960.4 1053.5H1554.7M813.7 1084.7H1554.7M813.7 1115.5H1554.7"/>
<path d="M960.4 868V1145M1078.2 868V1145M1195 868V1145M1313 868V1145M1430.8 868V1145"/></g>
<g font-size="11.5" fill="#444">
<text x="819.8" y="884">BP</text><text class="m" x="1019" y="884">120 / 80 mmHg</text><text class="m" x="1137" y="884">- / -</text><text class="m" x="1254" y="884">140 / 80 mmHg</text><text class="m" x="1371.6" y="884">- / -</text>
<text x="819.8" y="915">Pulse</text><text class="m" x="1019" y="915">66 bpm</text><text class="m" x="1137" y="915">-</text><text class="m" x="1254" y="915">-</text><text class="m" x="1371.6" y="915">-</text>
<text x="819.8" y="945.7">Temperature</text><text class="m" x="1019" y="945.7">-</text><text class="m" x="1137" y="945.7">-</text><text class="m" x="1254" y="945.7">98.7°F</text><text class="m" x="1371.6" y="945.7">98°F</text>
<text x="819.8" y="976.7">Weight</text><text class="m" x="1019" y="976.7">-</text><text class="m" x="1137" y="976.7">526 lbs</text><text class="m" x="1254" y="976.7">125 lbs</text><text class="m" x="1371.6" y="976.7">-</text>
<text x="819.8" y="1007.3">Height</text><text class="m" x="1019" y="1007.3">-</text><text class="m" x="1137" y="1007.3">-</text><text class="m" x="1254" y="1007.3">5 ft 2 in</text><text class="m" x="1371.6" y="1007.3">6 ft</text>
<text x="819.8" y="1038">BMI</text><text class="m" x="1019" y="1038">-</text><text class="m" x="1137" y="1038">-</text><text class="m" x="1254" y="1038">-</text><text class="m" x="1371.6" y="1038">-</text>
<text x="819.8" y="1069">Respiration</text><text class="m" x="1019" y="1069">16 bpm</text><text class="m" x="1137" y="1069">-</text><text class="m" x="1254" y="1069">-</text><text class="m" x="1371.6" y="1069">-</text>
<text x="819.8" y="1099.7">Pain</text><text class="m" x="1019" y="1099.7">-</text><text class="m" x="1137" y="1099.7">-</text><text class="m" x="1254" y="1099.7">-</text><text class="m" x="1371.6" y="1099.7">-</text>
<text x="819.8" y="1130.7">SpO2</text><text class="m" x="1019" y="1130.7">-</text><text class="m" x="1137" y="1130.7">-</text><text class="m" x="1254" y="1130.7">-</text><text class="m" x="1371.6" y="1130.7">-</text>
</g>
<use href="#dn2" x="1572" y="1155.3"/>
<rect x="802" y="1163" width="770" height="12" fill="#fafafa"/>
<use href="#lf2" x="807.6" y="1168.7"/><use href="#rt2" x="1560.8" y="1168.7"/>
</g>
</svg>
</body></html>
